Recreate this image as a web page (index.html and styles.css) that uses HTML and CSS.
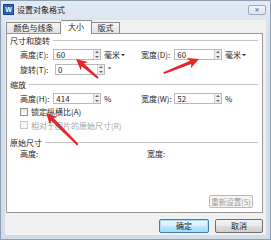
FILE: index.html
```html
<!DOCTYPE html>
<html lang="zh-CN">

<head>
    <meta charset="UTF-8" />
    <title>设置对象格式</title>
    <link rel="stylesheet" href="styles.css">
</head>

<body>

    <div class="window">
        <div class="titlebar">
            <span class="app-icon">W</span>
            <span class="title">设置对象格式</span>
            <span class="close-btn">✕</span>
        </div>

        <div class="client">
            <div class="tabs">
                <span class="tab tab-lines">颜色与线条</span>
                <span class="tab tab-size active">大小</span>
                <span class="tab tab-layout">版式</span>
            </div>

            <div class="panel">
                <div class="group-title">尺寸和旋转</div>
                <div class="row">
                    <span class="field-label">高度(E):</span>
                    <div class="spin"><span class="spin-value">60</span><span class="spin-btns"><i class="up"></i><i class="down"></i></span></div>
                    <span class="unit drop">毫米</span>
                    <span class="field-label">宽度(D):</span>
                    <div class="spin"><span class="spin-value">60</span><span class="spin-btns"><i class="up"></i><i class="down"></i></span></div>
                    <span class="unit drop">毫米</span>
                </div>
                <div class="row">
                    <span class="field-label">旋转(T):</span>
                    <div class="spin"><span class="spin-value">0</span><span class="spin-btns"><i class="up"></i><i class="down"></i></span></div>
                    <span class="unit">°</span>
                </div>

                <div class="group-title group-gap">缩放</div>
                <div class="row row-tight">
                    <span class="field-label">高度(H):</span>
                    <div class="spin"><span class="spin-value">414</span><span class="spin-btns"><i class="up"></i><i class="down"></i></span></div>
                    <span class="unit">%</span>
                    <span class="field-label">宽度(W):</span>
                    <div class="spin"><span class="spin-value">52</span><span class="spin-btns"><i class="up"></i><i class="down"></i></span></div>
                    <span class="unit">%</span>
                </div>
                <div class="check">
                    <span class="box"></span>锁定纵横比(A)
                </div>
                <div class="check check-last disabled">
                    <span class="box"></span>相对于图片的原始尺寸(R)
                </div>

                <div class="group-title group-small">原始尺寸</div>
                <div class="row row-plain">
                    <span class="orig-label">高度:</span>
                    <span>宽度:</span>
                </div>

                <span class="reset-btn">重新设置(S)</span>
            </div>

            <div class="actions">
                <span class="btn btn-default">确定</span>
                <span class="btn">取消</span>
            </div>
        </div>

        <svg class="marks" width="271" height="240" viewBox="0 0 271 240">
            <g transform="translate(76 59) rotate(-139.2)">
                <polygon points="0,0 -11,-5.5 -9,-1.8 -29,-1 -29,1 -9,1.8 -11,5.5" />
            </g>
            <g transform="translate(199 59) rotate(-21.8)">
                <polygon points="0,0 -11,-5.5 -9,-1.8 -38,-1 -38,1 -9,1.8 -11,5.5" />
            </g>
            <g transform="translate(46 113) rotate(-135)">
                <polygon points="0,0 -11,-5.5 -9,-1.8 -45,-1 -45,1 -9,1.8 -11,5.5" />
            </g>
        </svg>
    </div>

</body>

</html>
```

FILE: styles.css
```css
* {
    box-sizing: border-box;
}

body {
    margin: 0;
    font-family: "Noto Sans CJK SC", "Liberation Sans", sans-serif;
    font-size: 8px;
    color: #1e1e1e;
}

.window {
    position: relative;
    width: 271px;
    height: 240px;
    display: flex;
    flex-direction: column;
    background: linear-gradient(#e2eaf4, #d4dfeb 40px, #d1dce9);
    border: 1px solid #8e9fb4;
}

/* title bar */
.titlebar {
    height: 19px;
    display: flex;
    align-items: flex-start;
    padding: 3px 4px 0 2px;
}

.app-icon {
    width: 11px;
    height: 11px;
    background: #2b62b4;
    border: 1px solid #1b4590;
    color: #fff;
    font: bold 7px/9px "Liberation Sans", sans-serif;
    text-align: center;
}

.title {
    margin-left: 3px;
    line-height: 11px;
    color: #1a1a1a;
}

.close-btn {
    margin-left: auto;
    margin-top: 1px;
    width: 18px;
    height: 10px;
    border: 1px solid #9aa8b8;
    border-radius: 2px;
    background: linear-gradient(#f1f4f8, #dfe5ec);
    font: 6px/8px "DejaVu Sans", sans-serif;
    text-align: center;
    color: #555;
}

/* client area */
.client {
    flex: 1;
    margin: 0 4px 4px;
    padding: 0 3px 2px 1px;
    background: #f0f0f0;
    display: flex;
    flex-direction: column;
}

.tabs {
    display: flex;
    align-items: flex-end;
    height: 13px;
}

.tab {
    height: 11px;
    line-height: 10px;
    text-align: center;
    border: 1px solid #8c8c8c;
    border-bottom: none;
    background: linear-gradient(#f6f6f6, #e3e3e3);
}

.tab-lines {
    width: 55px;
}

.tab-size {
    width: 31px;
}

.tab-layout {
    width: 28px;
    border-left: none;
}

.tab.active {
    position: relative;
    z-index: 1;
    height: 14px;
    margin-bottom: -1px;
    line-height: 12px;
    background: #fff;
    border-left: none;
}

.panel {
    flex: 1;
    display: flex;
    flex-direction: column;
    background: #fff;
    border: 1px solid #979797;
}

.group-title {
    height: 13px;
    display: flex;
    align-items: center;
    padding: 0 4px 0 3px;
}

.group-title::after {
    content: "";
    flex: 1;
    margin-left: 3px;
    border-top: 1px solid #c4c4c4;
}

.group-gap {
    height: 15px;
}

.group-small {
    height: 12px;
    margin-top: 4px;
}

.row {
    height: 15px;
    display: flex;
    align-items: center;
    padding-left: 13px;
}

.row-tight {
    height: 13px;
}

.row-plain {
    height: 10px;
}

.field-label {
    width: 35px;
}

.orig-label {
    width: 127px;
}

.spin {
    width: 50px;
    height: 11px;
    display: flex;
    border: 1px solid #b9b9b9;
    background: #fff;
}

.spin-value {
    flex: 1;
    padding-left: 2px;
    line-height: 9px;
}

.spin-btns {
    width: 7px;
    display: flex;
    flex-direction: column;
    border-left: 1px solid #d0d0d0;
    background: #eeeeee;
}

.spin-btns i {
    flex: 1;
    display: flex;
    align-items: center;
    justify-content: center;
}

.spin-btns i::before {
    content: "";
    border-left: 2px solid transparent;
    border-right: 2px solid transparent;
}

.spin-btns .up::before {
    border-bottom: 2px solid #666;
}

.spin-btns .down::before {
    border-top: 2px solid #666;
}

.unit {
    width: 42px;
    padding-left: 3px;
    display: flex;
    align-items: center;
}

.drop::after {
    content: "";
    margin-left: 1px;
    border-left: 2px solid transparent;
    border-right: 2px solid transparent;
    border-top: 2px solid #222;
}

.check {
    height: 13px;
    display: flex;
    align-items: center;
    padding-left: 13px;
}

.check-last {
    height: 14px;
}

.box {
    width: 8px;
    height: 8px;
    margin-right: 3px;
    border: 1px solid #8e8f8f;
    background: linear-gradient(#e6e6e6, #fff);
}

.disabled {
    color: #a3a3a3;
}

.disabled .box {
    border-color: #c6c6c6;
    background: #f7f7f7;
}

.reset-btn {
    margin: auto 9px 4px auto;
    width: 44px;
    height: 13px;
    line-height: 11px;
    font-size: 7.5px;
    white-space: nowrap;
    text-align: center;
    border: 1px solid #b8b8b8;
    border-radius: 2px;
    background: #f4f4f4;
    color: #9a9a9a;
}

/* dialog buttons */
.actions {
    height: 14px;
    margin-top: 6px;
    display: flex;
    justify-content: flex-end;
    gap: 6px;
}

.btn {
    width: 48px;
    line-height: 12px;
    text-align: center;
    border: 1px solid #707070;
    border-radius: 2px;
    background: linear-gradient(#f2f2f2, #ebebeb 50%, #dddddd 50%, #cfcfcf);
}

.btn-default {
    width: 50px;
    border-color: #3c7fb1;
    box-shadow: inset 0 0 0 1px #a7dcf8;
    background: linear-gradient(#eaf6fd, #d9f0fc 50%, #bee6fd 50%, #a7d9f5);
}

/* red annotation arrows */
.marks {
    position: absolute;
    top: -1px;
    left: -1px;
    fill: #e3262b;
    pointer-events: none;
}
```
